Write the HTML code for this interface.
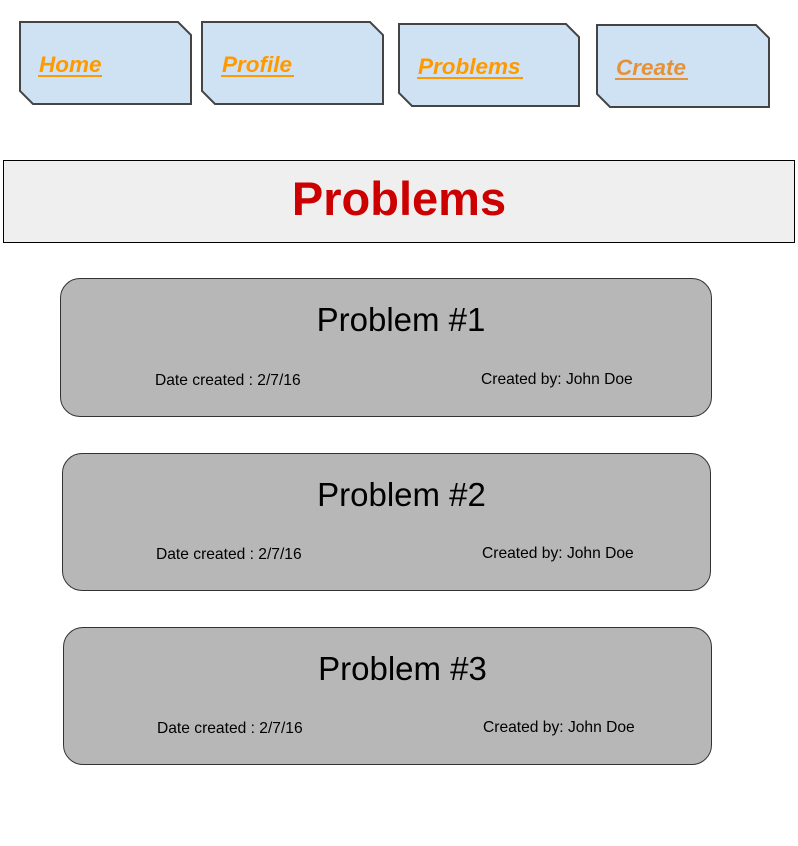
<!DOCTYPE html>
<html><head><style>
body{margin:0;width:798px;height:846px;background:#fff;position:relative;font-family:"Liberation Sans",sans-serif;overflow:hidden}
.hdr{position:absolute;left:3px;top:160px;width:790px;height:81px;background:#efefef;border:1px solid #000;text-align:center;color:#c00;font-weight:bold;font-size:47px;line-height:76px}
.card{position:absolute;background:#b7b7b7;border:1px solid #333;border-radius:20px;box-sizing:border-box}
.card .t{position:absolute;top:22px;left:30px;right:0;text-align:center;font-size:33px;color:#000}
.card .d,.card .c{position:absolute;top:92px;font-size:15.6px;color:#000}
</style></head><body>
<svg width="798" height="130" style="position:absolute;left:0;top:0" font-family="Liberation Sans" font-weight="bold" font-style="italic" font-size="22.5">
<g fill="#cfe2f3" stroke="#444" stroke-width="2">
<path d="M20 22 H178 L191 35 V104 H33 L20 91 Z"/>
<path d="M202 22 H370 L383 35 V104 H215 L202 91 Z"/>
<path d="M399 24 H566 L579 37 V106 H412 L399 93 Z"/>
<path d="M597 25 H756 L769 38 V107 H610 L597 94 Z"/>
</g>
<text x="39" y="72" fill="#f90">Home</text>
<text x="222" y="72" fill="#f90">Profile</text>
<text x="418" y="74" fill="#f90">Problems</text>
<text x="616" y="75" fill="#e69138">Create</text>
<g stroke-width="2" fill="none">
<path stroke="#f90" d="M38 76 H102 M221 76 H294 M417 78 H523"/>
<path stroke="#e69138" d="M615 79 H688"/>
</g>
</svg>
<div class="hdr">Problems</div>
<div class="card" style="left:60px;top:278px;width:652px;height:139px"><div class="t">Problem #1</div><div class="d" style="left:94px;top:93px">Date created : 2/7/16</div><div class="c" style="left:420px;top:92px">Created by: John Doe</div></div>
<div class="card" style="left:62px;top:453px;width:649px;height:138px"><div class="t">Problem #2</div><div class="d" style="left:93px;top:92px">Date created : 2/7/16</div><div class="c" style="left:419px;top:91px">Created by: John Doe</div></div>
<div class="card" style="left:63px;top:627px;width:649px;height:138px"><div class="t">Problem #3</div><div class="d" style="left:93px;top:92px">Date created : 2/7/16</div><div class="c" style="left:419px;top:91px">Created by: John Doe</div></div>
</body></html>
